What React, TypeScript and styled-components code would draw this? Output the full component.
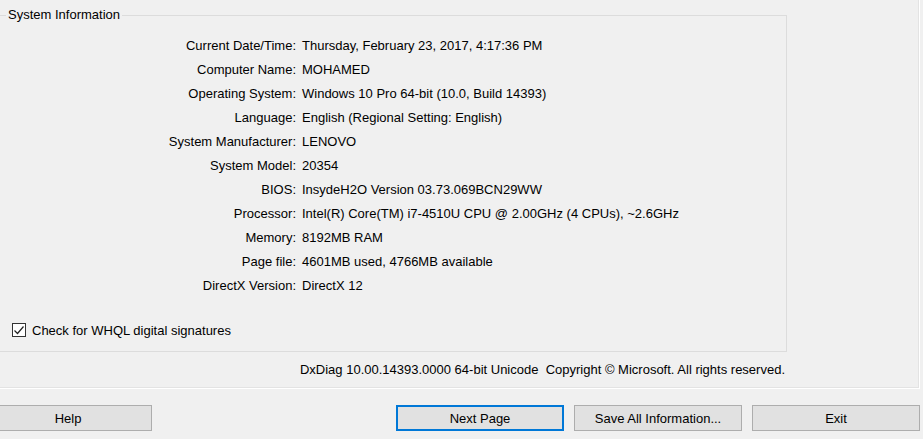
import React from "react";
import styled, { createGlobalStyle } from "styled-components";

const GlobalStyle = createGlobalStyle`
  html, body {
    margin: 0;
    padding: 0;
    background: #f0f0f0;
    overflow: hidden;
  }
  body {
    font-family: "Liberation Sans", Arial, sans-serif;
    color: #000;
  }
`;

const Window = styled.div`
  width: 923px;
  height: 439px;
  background: #f0f0f0;
  display: flex;
  flex-direction: column;
  overflow: hidden;
`;

const TabPage = styled.div`
  box-sizing: border-box;
  width: 920px;
  height: 389px;
  border-right: 1px solid #ffffff;
  border-bottom: 1px solid #ffffff;
  box-shadow: inset -1px -1px 0 #e3e3e3;
  display: flex;
  flex-direction: column;
`;

const GroupBox = styled.fieldset`
  box-sizing: border-box;
  width: 787px;
  height: 344px;
  margin: 0;
  margin-top: 8px;
  padding: 12px 0 0 0;
  border: 1px solid #dcdcdc;
  border-left: none;
  min-width: 0;
`;

const Legend = styled.legend`
  margin-left: 6px;
  padding: 0 2px;
  font-size: 13px;
  line-height: 14px;
`;

const InfoGrid = styled.div`
  display: grid;
  grid-template-columns: 296px 1fr;
  column-gap: 6px;
  grid-auto-rows: 24px;
  font-size: 13px;
`;

const Label = styled.div`
  text-align: right;
  line-height: 24px;
  white-space: nowrap;
`;

const Value = styled.div`
  line-height: 24px;
  white-space: nowrap;
`;

const CheckRow = styled.label`
  display: flex;
  align-items: center;
  gap: 6px;
  height: 24px;
  margin-top: 20px;
  padding-left: 12px;
  font-size: 13px;
`;

const CheckBox = styled.span`
  box-sizing: border-box;
  width: 14px;
  height: 14px;
  border: 1px solid #333333;
  background: #ffffff;
  display: flex;
  align-items: center;
  justify-content: center;
`;

const Footer = styled.div`
  box-sizing: border-box;
  width: 787px;
  margin-top: 10px;
  padding-right: 2px;
  text-align: right;
  font-size: 13px;
  line-height: 16px;
  white-space: nowrap;
`;

const ButtonBar = styled.div`
  display: flex;
  align-items: center;
  margin-top: 16px;
  height: 26px;
`;

const Button = styled.button<{ $primary?: boolean; $gap?: number }>`
  box-sizing: border-box;
  flex: none;
  width: 168px;
  height: 26px;
  margin: 0 0 0 ${(p) => p.$gap ?? 0}px;
  padding: 0;
  background: #e1e1e1;
  border: ${(p) => (p.$primary ? "2px solid #0078d7" : "1px solid #adadad")};
  font-family: "Liberation Sans", Arial, sans-serif;
  font-size: 13px;
  color: #000;
`;

const rows: [string, string][] = [
  ["Current Date/Time:", "Thursday, February 23, 2017, 4:17:36 PM"],
  ["Computer Name:", "MOHAMED"],
  ["Operating System:", "Windows 10 Pro 64-bit (10.0, Build 14393)"],
  ["Language:", "English (Regional Setting: English)"],
  ["System Manufacturer:", "LENOVO"],
  ["System Model:", "20354"],
  ["BIOS:", "InsydeH2O Version 03.73.069BCN29WW"],
  ["Processor:", "Intel(R) Core(TM) i7-4510U CPU @ 2.00GHz (4 CPUs), ~2.6GHz"],
  ["Memory:", "8192MB RAM"],
  ["Page file:", "4601MB used, 4766MB available"],
  ["DirectX Version:", "DirectX 12"],
];

export default function App() {
  return (
    <>
      <GlobalStyle />
      <Window>
        <TabPage>
          <GroupBox>
            <Legend>System Information</Legend>
            <InfoGrid>
              {rows.map(([k, v]) => (
                <React.Fragment key={k}>
                  <Label>{k}</Label>
                  <Value>{v}</Value>
                </React.Fragment>
              ))}
            </InfoGrid>
            <CheckRow>
              <CheckBox>
                <svg width="12" height="12" viewBox="0 0 12 12">
                  <polyline points="1.5,6.5 4.5,9.5 10.5,2.5" fill="none" stroke="#222" strokeWidth="1.2" />
                </svg>
              </CheckBox>
              Check for WHQL digital signatures
            </CheckRow>
          </GroupBox>
          <Footer>DxDiag 10.00.14393.0000 64-bit Unicode&nbsp;&nbsp;Copyright © Microsoft. All rights reserved.</Footer>
        </TabPage>
        <ButtonBar>
          <Button $gap={-16}>Help</Button>
          <Button $gap={244} $primary>Next Page</Button>
          <Button $gap={10}>Save All Information...</Button>
          <Button $gap={10}>Exit</Button>
        </ButtonBar>
      </Window>
    </>
  );
}
